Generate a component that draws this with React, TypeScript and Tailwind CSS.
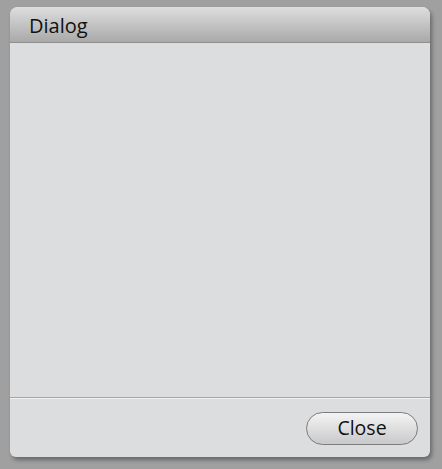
export default function App() {
  return (
    <div className="w-[442px] h-[469px] bg-[#a0a0a0] pt-[7px] pl-[10px]" style={{ fontFamily: '"Open Sans", "Noto Sans", sans-serif' }}>
      <div className="w-[420px] h-[450px] flex flex-col rounded-t-[8px] rounded-b-[6px] bg-[#dcdddf] shadow-[2px_3px_4px_rgba(0,0,0,0.35)] overflow-hidden">
        <div className="h-[36px] shrink-0 flex items-center pl-[19px] bg-gradient-to-b from-[#dedede] to-[#a9a9a9] border-b border-[#8f8f8f]">
          <span className="text-[20px] text-[#111] leading-none mt-[2px]">Dialog</span>
        </div>
        <div className="flex-1" />
        <div className="h-[60px] shrink-0 border-t border-[#a6a6a6] shadow-[inset_0_1px_0_#f2f2f2] flex items-start justify-end pr-[12px] pt-[14px]">
          <button className="w-[112px] h-[33px] rounded-full border border-[#7c7c7c] bg-gradient-to-b from-[#f4f4f4] to-[#c9c9cb] text-[19.5px] text-[#111] leading-none pb-[1px]">
            Close
          </button>
        </div>
      </div>
    </div>
  );
}
